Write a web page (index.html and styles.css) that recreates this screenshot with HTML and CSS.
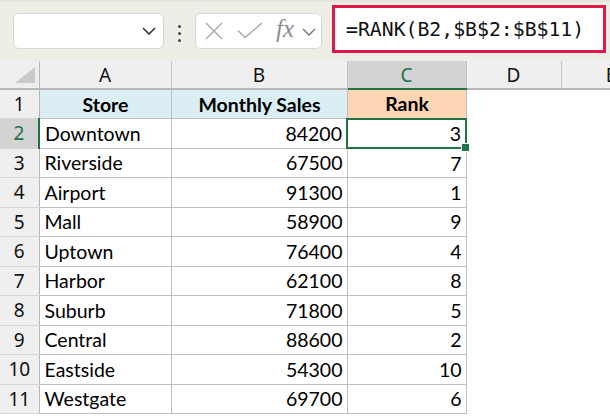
FILE: index.html
```html
<!DOCTYPE html>
<html>
  <head>
    <link rel="stylesheet" href="styles.css">
  </head>
  <body>
    <div class="toolbar">
      <div class="namebox">
        <svg class="chev" width="14" height="8" viewBox="0 0 14 8"><polyline points="1,1 7,7 13,1" fill="none" stroke="#333" stroke-width="1.6"/></svg>
      </div>
      <div class="grip"><span></span><span></span><span></span></div>
      <div class="fbuttons">
        <svg class="icon-x" width="18" height="18" viewBox="0 0 18 18"><path d="M1 1 L17 17 M17 1 L1 17" stroke="#a9a9a9" stroke-width="1.4"/></svg>
        <svg class="icon-check" width="26" height="17" viewBox="0 0 26 17"><polyline points="1,8.5 8,15.5 25,1" fill="none" stroke="#a9a9a9" stroke-width="1.4"/></svg>
        <span class="fx">fx</span>
        <svg class="chev-sm" width="14" height="8" viewBox="0 0 14 8"><polyline points="1,1 7,7 13,1" fill="none" stroke="#777" stroke-width="1.4"/></svg>
      </div>
      <div class="formula">=RANK(B2,$B$2:$B$11)</div>
    </div>

    <table class="sheet">
      <colgroup>
        <col class="c-row">
        <col class="c-a">
        <col class="c-b">
        <col class="c-c">
        <col class="c-d">
        <col class="c-e">
      </colgroup>
      <tr class="colhead">
        <th class="corner"><svg width="20" height="16" viewBox="0 0 20 16"><polygon points="20,0 20,16 0,16" fill="#c9c9c9"/></svg></th>
        <th>A</th>
        <th>B</th>
        <th class="active">C</th>
        <th>D</th>
        <th class="last">E</th>
      </tr>
      <tr>
        <th class="rowhead">1</th>
        <td class="title blue">Store</td>
        <td class="title blue">Monthly Sales</td>
        <td class="title peach">Rank</td>
        <td class="blank"></td><td class="blank"></td>
      </tr>
      <tr>
        <th class="rowhead active">2</th>
        <td>Downtown</td><td class="num">84200</td>
        <td class="num selected">3<span class="handle"></span></td>
        <td class="blank"></td><td class="blank"></td>
      </tr>
      <tr>
        <th class="rowhead">3</th>
        <td>Riverside</td><td class="num">67500</td><td class="num">7</td>
        <td class="blank"></td><td class="blank"></td>
      </tr>
      <tr>
        <th class="rowhead">4</th>
        <td>Airport</td><td class="num">91300</td><td class="num">1</td>
        <td class="blank"></td><td class="blank"></td>
      </tr>
      <tr>
        <th class="rowhead">5</th>
        <td>Mall</td><td class="num">58900</td><td class="num">9</td>
        <td class="blank"></td><td class="blank"></td>
      </tr>
      <tr>
        <th class="rowhead">6</th>
        <td>Uptown</td><td class="num">76400</td><td class="num">4</td>
        <td class="blank"></td><td class="blank"></td>
      </tr>
      <tr>
        <th class="rowhead">7</th>
        <td>Harbor</td><td class="num">62100</td><td class="num">8</td>
        <td class="blank"></td><td class="blank"></td>
      </tr>
      <tr>
        <th class="rowhead">8</th>
        <td>Suburb</td><td class="num">71800</td><td class="num">5</td>
        <td class="blank"></td><td class="blank"></td>
      </tr>
      <tr>
        <th class="rowhead">9</th>
        <td>Central</td><td class="num">88600</td><td class="num">2</td>
        <td class="blank"></td><td class="blank"></td>
      </tr>
      <tr>
        <th class="rowhead">10</th>
        <td>Eastside</td><td class="num">54300</td><td class="num">10</td>
        <td class="blank"></td><td class="blank"></td>
      </tr>
      <tr>
        <th class="rowhead">11</th>
        <td>Westgate</td><td class="num">69700</td><td class="num">6</td>
        <td class="blank"></td><td class="blank"></td>
      </tr>
    </table>
  </body>
</html>
```

FILE: styles.css
```css
body {
  margin: 0;
  width: 610px;
  height: 416px;
  overflow: hidden;
  background: #fff;
  font-family: "Lato", "Liberation Sans", sans-serif;
  color: #000;
}

/* formula toolbar */
.toolbar {
  display: flex;
  align-items: flex-start;
  height: 61px;
  box-sizing: border-box;
  padding-left: 13px;
  background: #eeeee7;
  border-top: 2px solid #e3e3dc;
}

.namebox {
  display: flex;
  align-items: center;
  justify-content: flex-end;
  width: 151px;
  height: 36px;
  margin-top: 11px;
  box-sizing: border-box;
  padding-right: 7px;
  background: #fff;
  border: 1px solid #d8d8d4;
  border-radius: 6px;
}

.grip {
  display: flex;
  flex-direction: column;
  gap: 4px;
  margin: 23px 14px 0 14px;
}

.grip span {
  width: 3px;
  height: 3px;
  border-radius: 50%;
  background: #444;
}

.fbuttons {
  display: flex;
  align-items: center;
  width: 127px;
  height: 36px;
  margin-top: 11px;
  box-sizing: border-box;
  padding-left: 9px;
  background: #fff;
  border: 1px solid #d8d8d4;
  border-radius: 6px;
}

.icon-x {
  margin-right: 14px;
}

.icon-check {
  margin-right: 13px;
  margin-top: -1px;
}

.fx {
  font-family: "Liberation Serif", serif;
  font-style: italic;
  font-size: 25px;
  color: #8c8c8c;
  margin-right: 8px;
  margin-top: -4px;
}

.chev-sm {
  margin-top: 2px;
}

.formula {
  width: 274px;
  height: 48px;
  margin-top: 3px;
  margin-left: 10px;
  box-sizing: border-box;
  padding: 10px 0 0 11px;
  background: #fff;
  border: 3px solid #e0194b;
  font-family: "DejaVu Sans Mono", monospace;
  font-size: 19.8px;
  color: #111;
  white-space: nowrap;
}

/* sheet grid */
.sheet {
  border-collapse: collapse;
  table-layout: fixed;
  width: 661px;
}

.c-row { width: 39px; }
.c-a { width: 132px; }
.c-b { width: 176px; }
.c-c { width: 119px; }
.c-d { width: 95px; }
.c-e { width: 100px; }

.colhead {
  height: 28px;
}

.colhead th {
  padding: 0;
  background: #efefef;
  border-right: 1px solid #c6c6c6;
  border-bottom: 2px solid #b8b8b8;
  font-family: "Noto Sans", sans-serif;
  font-weight: 400;
  font-size: 19px;
  color: #111;
  text-align: center;
}

.colhead th.active {
  background: #d3d3d3;
  color: #217346;
  border-bottom: 2px solid #217346;
}

.colhead th.corner {
  text-align: right;
  vertical-align: bottom;
  padding: 0 4px 5px 0;
  border-right: 1px solid #b8b8b8;
}

.colhead th.corner svg {
  display: block;
  margin-left: auto;
}

tr {
  height: 29.5px;
}

.rowhead {
  padding: 0;
  background: #efefef;
  border-right: 1px solid #b8b8b8;
  border-bottom: 1px solid #d6d6d6;
  font-family: "Noto Sans", sans-serif;
  font-weight: 400;
  font-size: 19px;
  color: #111;
  text-align: center;
}

.rowhead.active {
  background: #d3d3d3;
  color: #217346;
  border-right: 2px solid #217346;
}

td {
  padding: 0 4px 0 5px;
  border: 1px solid #bfbfbf;
  font-size: 19.5px;
  white-space: nowrap;
  overflow: hidden;
}

td.num {
  text-align: right;
}

td.title {
  text-align: center;
  font-weight: 700;
}

td.blue {
  background: #daeef3;
}

td.peach {
  background: #fcd5b4;
}

td.blank {
  border: none;
}

td.selected {
  position: relative;
  overflow: visible;
  border: 2px solid #217346;
}

.handle {
  position: absolute;
  right: -5px;
  bottom: -5px;
  width: 7px;
  height: 7px;
  background: #217346;
  border: 1px solid #fff;
}
```
